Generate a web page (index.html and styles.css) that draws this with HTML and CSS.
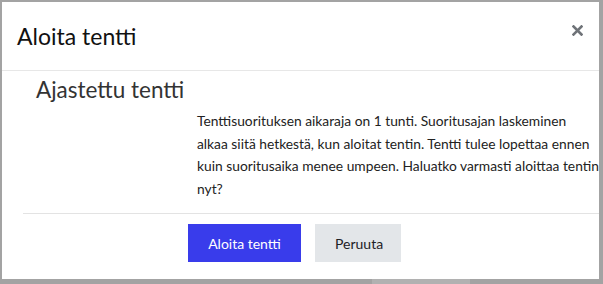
FILE: index.html
```html
<!DOCTYPE html>
<html lang="fi">
<head>
  <meta charset="UTF-8">
  <meta name="viewport" content="width=device-width, initial-scale=1">
  <title>Aloita tentti</title>
  <link rel="stylesheet" href="styles.css">
</head>
<body>
  <div class="modal">
    <div class="modal-header">
      <h5 class="modal-title">Aloita tentti</h5>
      <button class="close" aria-label="Sulje">
        <svg width="11" height="11" viewBox="0 0 11 11">
          <path d="M1.5 1.5 L9.5 9.5 M9.5 1.5 L1.5 9.5" stroke="#6f7378" stroke-width="2.6" stroke-linecap="square"/>
        </svg>
      </button>
    </div>
    <div class="modal-body">
      <h3 class="section-title">Ajastettu tentti</h3>
      <p class="notice">Tenttisuorituksen aikaraja on 1 tunti. Suoritusajan laskeminen<br>
        alkaa siitä hetkestä, kun aloitat tentin. Tentti tulee lopettaa ennen<br>
        kuin suoritusaika menee umpeen. Haluatko varmasti aloittaa tentin<br>
        nyt?</p>
    </div>
    <div class="modal-footer">
      <button class="btn btn-primary">Aloita tentti</button>
      <button class="btn btn-secondary">Peruuta</button>
    </div>
  </div>
  <div class="page-strip">
    <span class="page-btn"></span>
  </div>
</body>
</html>
```

FILE: styles.css
```css
html, body {
  margin: 0;
  height: 284px;
  overflow: hidden;
}
body {
  background-color: #a3a3a3;
  font-family: Lato, "Open Sans", sans-serif;
  color: #1d2125;
  padding-top: 2px;
  box-sizing: border-box;
}
.modal {
  margin: 0 4px 0 2px;
  height: 277px;
  background: white;
  display: flex;
  flex-direction: column;
}
.modal-header {
  height: 68px;
  border-bottom: 1px solid #e7e7e7;
  display: flex;
  align-items: center;
  justify-content: space-between;
  padding: 0 16px 0 15px;
}
.modal-title {
  margin: 0;
  font-size: 23px;
  font-weight: normal;
  color: #111;
}
.close {
  border: none;
  background: none;
  padding: 0;
  margin-top: -12px;
  display: flex;
}
.modal-body {
  padding: 4px 0 0 34px;
  height: 142px;
  box-sizing: border-box;
}
.section-title {
  margin: 0;
  font-size: 22.5px;
  font-weight: normal;
  color: #333;
  line-height: 30px;
}
.notice {
  margin: 5px 0 0 161px;
  white-space: nowrap;
  font-size: 13.8px;
  line-height: 22.5px;
  color: #222;
}
.modal-footer {
  margin-left: 21px;
  border-top: 1px solid #e3e3e3;
  padding: 10px 0 0 165px;
  display: flex;
  gap: 14px;
}
.btn {
  height: 38px;
  border: none;
  font-family: Lato, "Open Sans", sans-serif;
  font-size: 14px;
  padding: 0 20px;
  cursor: pointer;
}
.btn-primary {
  width: 113px;
  background-color: #393ceb;
  color: white;
}
.btn-secondary {
  width: 86px;
  background-color: #e3e6e9;
  color: #1d2125;
}
.page-strip {
  height: 5px;
  overflow: hidden;
  padding-left: 372px;
  display: flex;
}
.page-btn {
  width: 98px;
  height: 5px;
  background: #b1b1b1;
}
```
